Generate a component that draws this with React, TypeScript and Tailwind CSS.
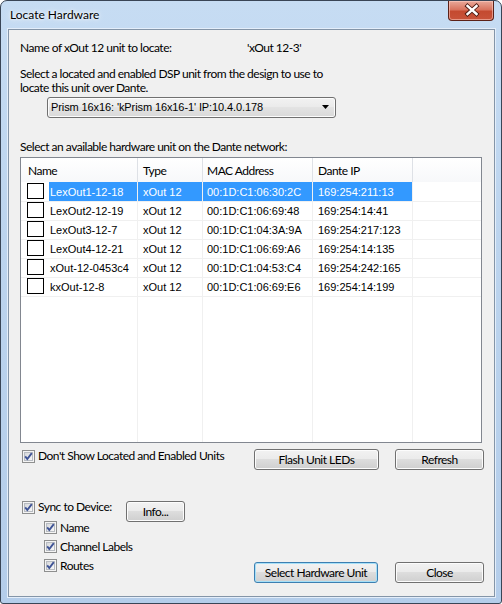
import type { ReactNode } from "react";

const ui = "font-['Lato','Segoe_UI',sans-serif] text-[12px] tracking-[-0.5px] text-black";
const list = "font-['Liberation_Sans',Arial,sans-serif] text-[11px]";
const cols = "grid grid-cols-[117px_65px_110px_100px_1fr]";

const units = [
  { name: "LexOut1-12-18", type: "xOut 12", mac: "00:1D:C1:06:30:2C", ip: "169:254:211:13" },
  { name: "LexOut2-12-19", type: "xOut 12", mac: "00:1D:C1:06:69:48", ip: "169:254:14:41" },
  { name: "LexOut3-12-7", type: "xOut 12", mac: "00:1D:C1:04:3A:9A", ip: "169:254:217:123" },
  { name: "LexOut4-12-21", type: "xOut 12", mac: "00:1D:C1:06:69:A6", ip: "169:254:14:135" },
  { name: "xOut-12-0453c4", type: "xOut 12", mac: "00:1D:C1:04:53:C4", ip: "169:254:242:165" },
  { name: "kxOut-12-8", type: "xOut 12", mac: "00:1D:C1:06:69:E6", ip: "169:254:14:199" },
];

// classic Win7 check box, always ticked here
function CheckBox() {
  return (
    <svg width="13" height="13" viewBox="0 0 13 13" className="shrink-0 block">
      <defs>
        <linearGradient id="cbFill" x1="0" y1="0" x2="1" y2="1">
          <stop offset="0" stopColor="#d4d6d9" />
          <stop offset="1" stopColor="#fafafa" />
        </linearGradient>
      </defs>
      <rect x="0.5" y="0.5" width="12" height="12" fill="#f4f4f4" stroke="#8e8f8f" />
      <rect x="2.5" y="2.5" width="8" height="8" fill="url(#cbFill)" stroke="#b8bcc2" />
      <path d="M3.2 6.4 L5.3 9 L9.8 3.2" fill="none" stroke="#3f5496" strokeWidth="1.9" />
    </svg>
  );
}

function Check({ children, className = "" }: { children: ReactNode; className?: string }) {
  return (
    <div className={`flex items-center gap-[3px] ${className}`}>
      <CheckBox />
      <span className="leading-[14px]">{children}</span>
    </div>
  );
}

function Button({ children, w, primary = false }: { children: ReactNode; w: string; primary?: boolean }) {
  return (
    <button
      className={`${w} h-[21px] shrink-0 rounded-[3px] border ${
        primary
          ? "border-[#3c7fb1] shadow-[inset_0_0_0_1px_#a6e0f8]"
          : "border-[#707070] shadow-[inset_0_0_0_1px_#fcfcfc]"
      } bg-[linear-gradient(#f2f2f2_0%,#ebebeb_45%,#dddddd_50%,#cfcfcf_100%)] ${ui} leading-[19px]`}
    >
      {children}
    </button>
  );
}

function CloseButton() {
  return (
    <div className="absolute top-0 right-[7px] w-[46px] h-[20px] rounded-b-[4px] border border-t-0 border-[#5b2118] bg-[linear-gradient(#e9a99a_0%,#d9745f_45%,#c44a30_55%,#c8533a_100%)] shadow-[inset_0_0_0_1px_rgba(255,210,200,0.55)]">
      <svg width="46" height="20" viewBox="0 0 46 20" className="block">
        <path d="M18.5 5 L27.5 13 M27.5 5 L18.5 13" stroke="#4a1a12" strokeWidth="4.2" strokeLinecap="square" />
        <path d="M18.5 5 L27.5 13 M27.5 5 L18.5 13" stroke="#ffffff" strokeWidth="2.4" strokeLinecap="square" />
      </svg>
    </div>
  );
}

export default function App() {
  return (
    <div className="w-[502px] h-[604px] flex flex-col relative rounded-t-[7px] rounded-b-[3px] border border-[#394556] bg-[linear-gradient(180deg,#c6dcf3_0%,#bcd4ee_40%,#b4cdea_100%)] overflow-hidden">
      {/* title bar */}
      <div className="h-[28px] shrink-0 flex items-center pl-[9px]">
        <span className="font-['Lato','Segoe_UI',sans-serif] text-[12px] text-black [text-shadow:0_0_6px_#ffffff,0_0_3px_#ffffff]">
          Locate Hardware
        </span>
      </div>
      <CloseButton />

      {/* client area */}
      <div className="flex-1 ml-[7px] mr-[6px] mb-[6px] border border-[#8495a8] outline outline-1 outline-[#e4eefa] bg-[#f0f0f0] pl-[11px] pr-[10px] pt-[10px]">
        <div className={`${ui} flex leading-[15px]`}>
          <span className="w-[227px]">Name of xOut 12 unit to locate:</span>
          <span>'xOut 12-3'</span>
        </div>

        <p className={`${ui} mt-[12px] leading-[14px]`}>
          Select a located and enabled DSP unit from the design to use to
          <br />
          locate this unit over Dante.
        </p>

        {/* DSP unit picker */}
        <div className="ml-[27px] mt-[2px] w-[289px] h-[21px] rounded-[3px] border border-[#707070] shadow-[inset_0_0_0_1px_#fcfcfc] bg-[linear-gradient(#f2f2f2_0%,#ebebeb_45%,#e3e3e3_50%,#d9d9d9_100%)] flex items-center pl-[3px] pr-[5px]">
          <span className={`${list} flex-1 tracking-[-0.1px]`}>Prism 16x16: 'kPrism 16x16-1' IP:10.4.0.178</span>
          <svg width="8" height="5" viewBox="0 0 8 5">
            <path d="M0 0 H7 L3.5 4 Z" fill="#000" />
          </svg>
        </div>

        <p className={`${ui} mt-[21px] leading-[15px]`}>Select an available hardware unit on the Dante network:</p>

        {/* unit list */}
        <div className="mt-[3px] w-[462px] h-[286px] border border-[#828790] bg-white flex flex-col">
          <div className={`${cols} h-[24px] shrink-0 ${ui} bg-[linear-gradient(#ffffff,#f7f8fa)]`}>
            <div className="border-r border-[#dee1e6] pl-[7px] pt-[4px]">Name</div>
            <div className="border-r border-[#dee1e6] pl-[5px] pt-[4px]">Type</div>
            <div className="border-r border-[#dee1e6] pl-[4px] pt-[4px]">MAC Address</div>
            <div className="border-r border-[#dee1e6] pl-[5px] pt-[4px]">Dante IP</div>
            <div />
          </div>

          {units.map((u, i) => {
            const sel = i === 0;
            const cell = `flex items-center pt-[2px] border-r border-b border-[#f0f0f0] ${sel ? "bg-[#3399ff] text-white" : "text-black"}`;
            return (
              <div key={u.name} className={`${cols} h-[19px] shrink-0 ${list}`}>
                <div className="flex items-center border-r border-b border-[#f0f0f0] pl-[6px]">
                  <span className="w-[17px] h-[16px] border border-black bg-white shrink-0" />
                  <span className={`ml-[5px] h-full flex-1 flex items-center pl-[1px] pt-[2px] ${sel ? "bg-[#3399ff] text-white" : "text-black"}`}>
                    {u.name}
                  </span>
                </div>
                <div className={`${cell} pl-[5px]`}>{u.type}</div>
                <div className={`${cell} pl-[4px]`}>{u.mac}</div>
                <div className={`${cell} pl-[5px]`}>{u.ip}</div>
                <div className="border-b border-[#f0f0f0]" />
              </div>
            );
          })}

          <div className={`${cols} flex-1`}>
            <div className="border-r border-[#f0f0f0]" />
            <div className="border-r border-[#f0f0f0]" />
            <div className="border-r border-[#f0f0f0]" />
            <div className="border-r border-[#f0f0f0]" />
            <div />
          </div>
        </div>

        <div className={`${ui} mt-[6px] flex items-start`}>
          <Check className="ml-[2px]">Don't Show Located and Enabled Units</Check>
          <div className="ml-auto flex gap-[16px]">
            <Button w="w-[125px]">Flash Unit LEDs</Button>
            <Button w="w-[89px]">Refresh</Button>
          </div>
        </div>

        <div className={`${ui} mt-[30px] flex items-start`}>
          <div className="flex flex-col">
            <div className="h-[14px] flex items-start">
              <Check className="ml-[2px] w-[104px]">Sync to Device:</Check>
              <div className="mt-[1px]">
                <Button w="w-[59px]">Info...</Button>
              </div>
            </div>
            <div className="ml-[24px] mt-[4px] flex flex-col">
              <Check className="h-[19px]">Name</Check>
              <Check className="h-[19px]">Channel Labels</Check>
              <Check className="h-[19px]">Routes</Check>
            </div>
          </div>
          <div className="ml-auto mt-[62px] flex gap-[17px]">
            <Button w="w-[124px]" primary>
              Select Hardware Unit
            </Button>
            <Button w="w-[89px]">Close</Button>
          </div>
        </div>
      </div>
    </div>
  );
}
